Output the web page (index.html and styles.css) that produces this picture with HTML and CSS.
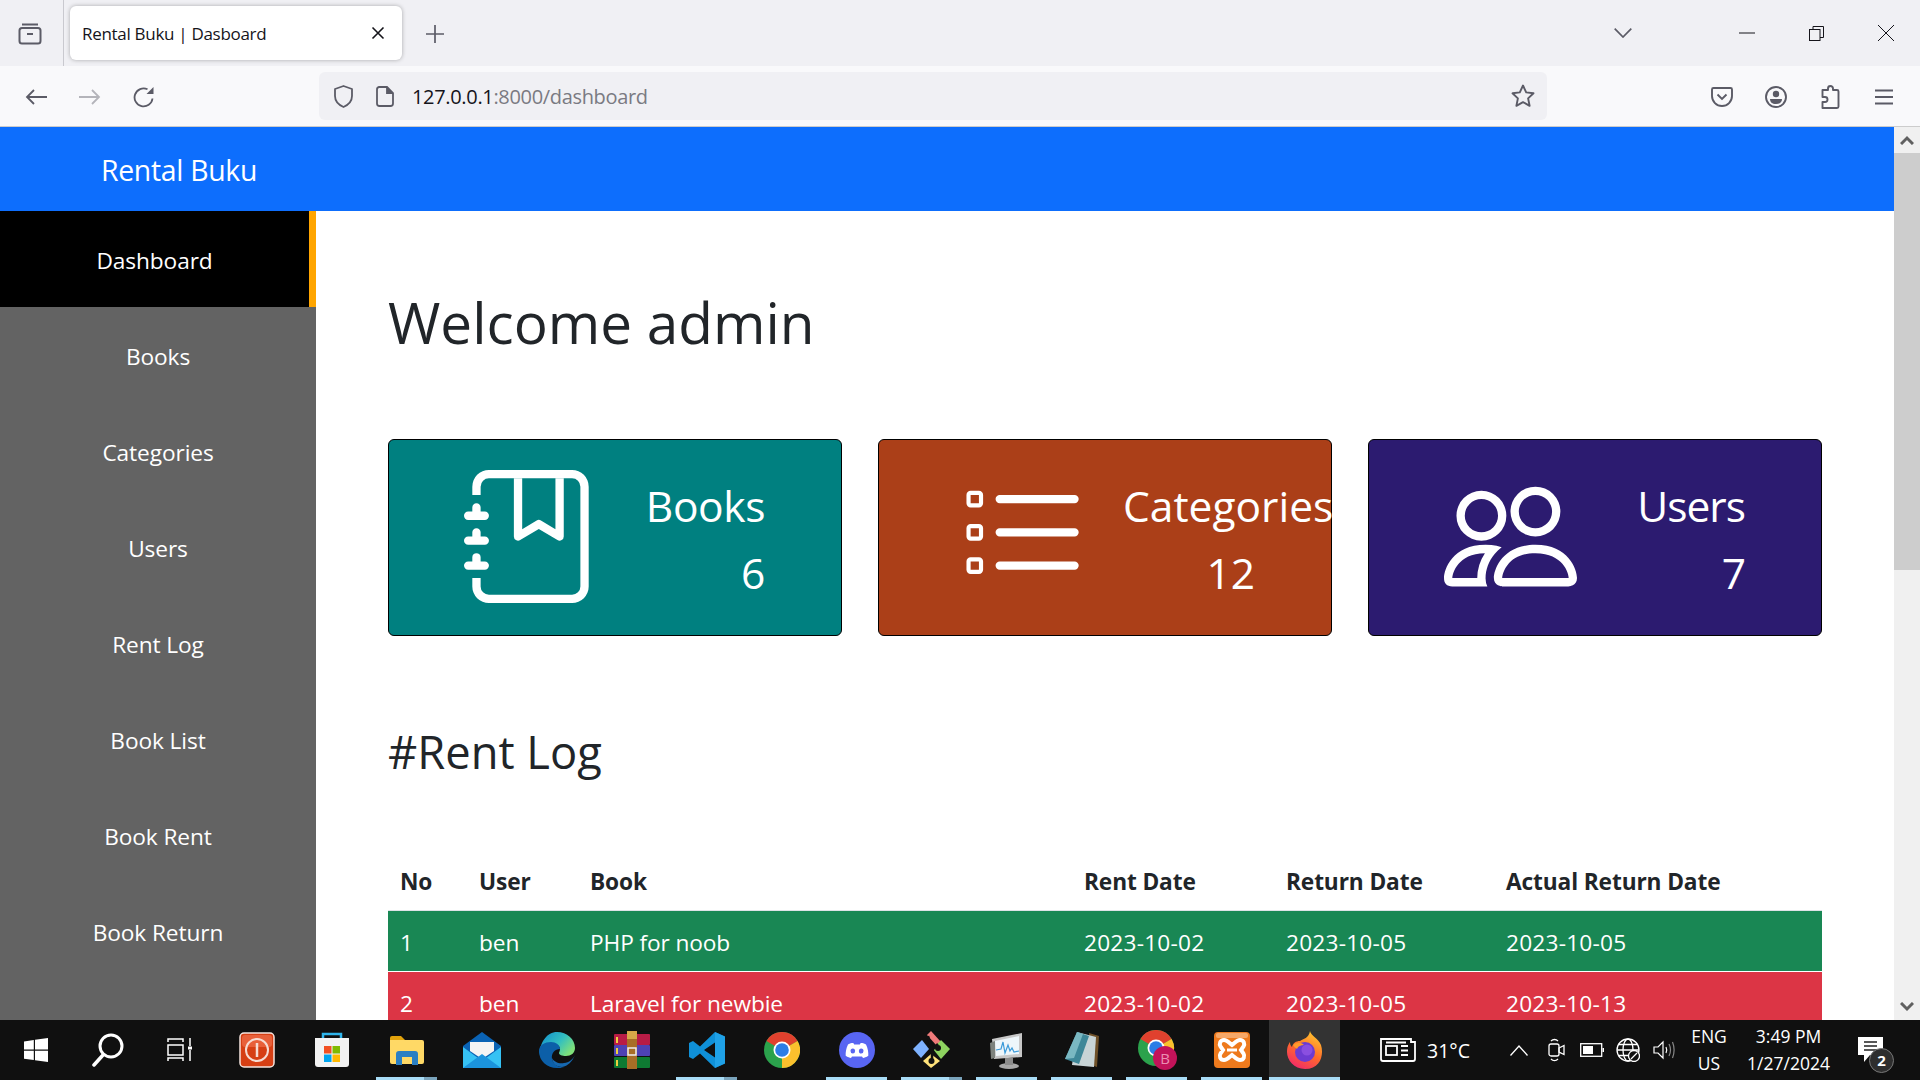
FILE: index.html
```html
<!DOCTYPE html>
<html lang="en">
<head>
<meta charset="utf-8">
<title>Rental Buku | Dasboard</title>
<link rel="stylesheet" href="styles.css">
</head>
<body>
<div class="screen">
  <div class="tabstrip">
    <span class="view-btn">
      <svg width="24" height="24" viewBox="0 0 24 24" fill="none" stroke="#5b5b66" stroke-width="2"><path d="M4 3.500h16"/><rect x="1.500" y="7" width="21" height="15.500" rx="2.500"/><path d="M9 13h6"/></svg>
    </span>
    <span class="tab-divider"></span>
    <div class="tab">
      <span class="tab-title">Rental Buku | Dasboard</span>
      <svg width="14" height="14" viewBox="0 0 14 14" stroke="#15141a" stroke-width="1.600"><path d="M1.500 1.500l11 11M12.500 1.500l-11 11"/></svg>
    </div>
    <svg class="new-tab" width="18" height="18" viewBox="0 0 18 18" stroke="#5b5b66" stroke-width="1.700"><path d="M9 0v18M0 9h18"/></svg>
    <svg class="tab-list" width="18" height="10" viewBox="0 0 18 10" fill="none" stroke="#5b5b66" stroke-width="1.700"><path d="M.7.7L9 9l8.300-8.300"/></svg>
    <svg class="win-min" width="16" height="2" viewBox="0 0 16 2" stroke="#15141a" stroke-width="1"><path d="M0 1h16"/></svg>
    <svg class="win-restore" width="15" height="15" viewBox="0 0 15 15" fill="none" stroke="#15141a" stroke-width="1"><rect x=".5" y="3.500" width="10.500" height="11"/><path d="M4 3.500V.5h10.500v11H11"/></svg>
    <svg class="win-close" width="16" height="16" viewBox="0 0 16 16" stroke="#15141a" stroke-width="1"><path d="M0 0l16 16M16 0L0 16"/></svg>
  </div>

  <div class="toolbar">
    <span class="tool-slot"><svg width="22" height="16" viewBox="0 0 22 16" fill="none" stroke="#5b5b66" stroke-width="1.800"><path d="M22 8H2M9 1L2 8l7 7"/></svg></span>
    <span class="tool-slot"><svg width="22" height="16" viewBox="0 0 22 16" fill="none" stroke="#b4b4ba" stroke-width="1.800"><path d="M0 8h20M13 1l7 7-7 7"/></svg></span>
    <span class="tool-slot"><svg width="22" height="22" viewBox="0 0 22 22" fill="none" stroke="#5b5b66" stroke-width="1.800"><path d="M19.500 12.500A9 9 0 1 1 14.500 3.300"/><path d="M20.500 1v7h-7z" fill="#5b5b66" stroke="none"/></svg></span>
    <div class="urlbar">
      <svg width="21" height="23" viewBox="0 0 21 23" fill="none" stroke="#5b5b66" stroke-width="1.800"><path d="M10.500 1L2 4v7c0 5 4 9 8.500 11 4.500-2 8.500-6 8.500-11V4z" stroke-linejoin="round"/></svg>
      <svg class="page-ic" width="18" height="21" viewBox="0 0 18 21" fill="none" stroke="#5b5b66" stroke-width="1.800"><path d="M3 1h8l6 6v10.500a2.500 2.500 0 0 1-2.500 2.500h-11A2.500 2.500 0 0 1 1 17.500v-14A2.500 2.500 0 0 1 3 1z"/><path d="M11 1v6h6" fill="#5b5b66"/></svg>
      <span class="url"><span class="url-host">127.0.0.1</span>:8000/dashboard</span>
      <svg class="star" width="24" height="24" viewBox="0 0 24 24" fill="none" stroke="#5b5b66" stroke-width="1.900" stroke-linejoin="round"><path d="M12 1.500l3.200 6.900 7.300.9-5.400 5.100 1.500 7.400L12 18.100l-6.600 3.700 1.500-7.400L1.500 9.300l7.300-.9z"/></svg>
    </div>
    <span class="tool-slot"><svg width="22" height="20" viewBox="0 0 22 20" fill="none" stroke="#5b5b66" stroke-width="1.900"><path d="M2.500 1h17A1.500 1.500 0 0 1 21 2.500V9a10 10 0 0 1-20 0V2.500A1.500 1.500 0 0 1 2.500 1z"/><path d="M6.500 7.500l4.500 4.500 4.500-4.500"/></svg></span>
    <span class="tool-slot"><svg width="22" height="22" viewBox="0 0 22 22" fill="none" stroke="#5b5b66" stroke-width="1.900"><circle cx="11" cy="11" r="10"/><circle cx="11" cy="8" r="3.200" fill="#5b5b66" stroke="none"/><path d="M5 13h12c0 3-2 5-6 5s-6-2-6-5z" fill="#5b5b66" stroke="none"/></svg></span>
    <span class="tool-slot"><svg width="20" height="24" viewBox="0 0 20 24" fill="none" stroke="#5b5b66" stroke-width="1.900" stroke-linejoin="round"><path d="M8 5V3.500a2.500 2.500 0 0 1 5 0V5h4a1.500 1.500 0 0 1 1.500 1.500v15a1.500 1.500 0 0 1-1.500 1.500H2.500v-6H5a2 2 0 0 0 0-5H2.500V5z"/></svg></span>
    <span class="tool-slot"><svg width="18" height="16" viewBox="0 0 18 16" stroke="#5b5b66" stroke-width="1.900"><path d="M0 1.500h18M0 8h18M0 14.500h18"/></svg></span>
  </div>

  <div class="viewport">
    <div class="app">
      <header class="brand">Rental Buku</header>
      <div class="app-body">
        <nav class="sidebar">
          <a class="nav-item active">Dashboard</a>
          <a class="nav-item">Books</a>
          <a class="nav-item">Categories</a>
          <a class="nav-item">Users</a>
          <a class="nav-item">Rent Log</a>
          <a class="nav-item">Book List</a>
          <a class="nav-item">Book Rent</a>
          <a class="nav-item">Book Return</a>
        </nav>
        <main class="main">
          <h1 class="title">Welcome admin</h1>
          <section class="cards">
            <div class="card teal">
              <svg class="card-icon" viewBox="0 0 16 16" fill="#fff"><path fill-rule="evenodd" d="M6 8V1h1v6.117L8.743 6.070a.5.5 0 0 1 .514 0L11 7.117V1h1v7a.5.5 0 0 1-.757.429L9 7.083 6.757 8.430A.5.5 0 0 1 6 8z"/><path d="M3 0h10a2 2 0 0 1 2 2v12a2 2 0 0 1-2 2H3a2 2 0 0 1-2-2v-1h1v1a1 1 0 0 0 1 1h10a1 1 0 0 0 1-1V2a1 1 0 0 0-1-1H3a1 1 0 0 0-1 1v1H1V2a2 2 0 0 1 2-2z"/><path d="M1 5v-.5a.5.5 0 0 1 1 0V5h.5a.5.5 0 0 1 0 1h-2a.5.5 0 0 1 0-1H1zm0 3v-.5a.5.5 0 0 1 1 0V8h.5a.5.5 0 0 1 0 1h-2a.5.5 0 0 1 0-1H1zm0 3v-.5a.5.5 0 0 1 1 0v.5h.5a.5.5 0 0 1 0 1h-2a.5.5 0 0 1 0-1H1z"/></svg>
              <div class="card-text"><div>Books</div><div>6</div></div>
            </div>
            <div class="card rust">
              <svg class="card-icon" viewBox="0 0 16 16" fill="#fff"><path fill-rule="evenodd" d="M2 2.500a.5.5 0 0 0-.5.5v1a.5.5 0 0 0 .5.5h1a.5.5 0 0 0 .5-.5V3a.5.5 0 0 0-.5-.5H2zM3 3H2v1h1V3z"/><path d="M5 3.500a.5.5 0 0 1 .5-.5h9a.5.5 0 0 1 0 1h-9a.5.5 0 0 1-.5-.5zM5.500 7a.5.5 0 0 0 0 1h9a.5.5 0 0 0 0-1h-9zm0 4a.5.5 0 0 0 0 1h9a.5.5 0 0 0 0-1h-9z"/><path fill-rule="evenodd" d="M1.500 7a.5.5 0 0 1 .5-.5h1a.5.5 0 0 1 .5.5v1a.5.5 0 0 1-.5.5H2a.5.5 0 0 1-.5-.5V7zM2 7h1v1H2V7zm0 3.500a.5.5 0 0 0-.5.5v1a.5.5 0 0 0 .5.5h1a.5.5 0 0 0 .5-.5v-1a.5.5 0 0 0-.5-.5H2zm1 .5H2v1h1v-1z"/></svg>
              <div class="card-text"><div>Categories</div><div>12</div></div>
            </div>
            <div class="card indigo">
              <svg class="card-icon" viewBox="0 0 16 16" fill="#fff"><path d="M15 14s1 0 1-1-1-4-5-4-5 3-5 4 1 1 1 1h8zm-7.978-1A.261.261 0 0 1 7 12.996c.001-.264.167-1.030.76-1.720C8.312 10.629 9.282 10 11 10c1.717 0 2.687.63 3.240 1.276.593.69.758 1.457.76 1.720l-.008.002a.274.274 0 0 1-.014.002H7.022zM11 7a2 2 0 1 0 0-4 2 2 0 0 0 0 4zm3-2a3 3 0 1 1-6 0 3 3 0 0 1 6 0zM6.936 9.280a5.880 5.880 0 0 0-1.230-.247A7.350 7.350 0 0 0 5 9c-4 0-5 3-5 4 0 .667.333 1 1 1h4.216A2.238 2.238 0 0 1 5 13c0-1.010.377-2.042 1.090-2.904.243-.294.526-.569.846-.816zM4.920 10A5.493 5.493 0 0 0 4 13H1c0-.26.164-1.030.76-1.724.545-.636 1.492-1.256 3.160-1.275zM1.500 5.500a3 3 0 1 1 6 0 3 3 0 0 1-6 0zm3-2a2 2 0 1 0 0 4 2 2 0 0 0 0-4z"/></svg>
              <div class="card-text"><div>Users</div><div>7</div></div>
            </div>
          </section>
          <h2 class="subtitle">#Rent Log</h2>
          <table class="log">
            <colgroup>
              <col class="c-no"><col class="c-user"><col class="c-book"><col class="c-rent"><col class="c-ret"><col class="c-act">
            </colgroup>
            <thead>
              <tr><th>No</th><th>User</th><th>Book</th><th>Rent Date</th><th>Return Date</th><th>Actual Return Date</th></tr>
            </thead>
            <tbody>
              <tr class="ok"><td>1</td><td>ben</td><td>PHP for noob</td><td>2023-10-02</td><td>2023-10-05</td><td>2023-10-05</td></tr>
              <tr class="late"><td>2</td><td>ben</td><td>Laravel for newbie</td><td>2023-10-02</td><td>2023-10-05</td><td>2023-10-13</td></tr>
            </tbody>
          </table>
        </main>
      </div>
    </div>
    <div class="scrollbar">
      <span class="sb-btn"><svg width="14" height="10" viewBox="0 0 14 10" fill="none" stroke="#606060" stroke-width="3"><path d="M1 9l6-6 6 6"/></svg></span>
      <span class="sb-thumb"></span>
      <span class="sb-track"></span>
      <span class="sb-btn"><svg width="14" height="10" viewBox="0 0 14 10" fill="none" stroke="#606060" stroke-width="3"><path d="M1 1l6 6 6-6"/></svg></span>
    </div>
  </div>

  <footer class="taskbar">
    <span class="sys-slot"><svg width="24" height="24" viewBox="0 0 24 24" fill="#fff"><path d="M0 3.400L9.800 2v9.500H0zM11 1.800L24 0v11.500H11zM0 12.700h9.800v9.400L0 20.700zM11 12.700h13V24l-13-1.800z"/></svg></span>
    <span class="sys-slot"><svg width="34" height="34" viewBox="0 0 34 34" fill="none" stroke="#fff"><circle cx="20" cy="13" r="11" stroke-width="3"/><path d="M12 22L3 32" stroke-width="3.500" stroke-linecap="round"/></svg></span>
    <span class="sys-slot"><svg width="26" height="24" viewBox="0 0 26 24" fill="none" stroke="#fff" stroke-width="1.500"><path d="M1 4V1h15v3M1 23v-3h15v3"/><rect x="1" y="7" width="15" height="10"/><path d="M23 0v8M23 12v11"/><rect x="21" y="8.500" width="4" height="3" fill="#fff" stroke="none"/></svg></span>
    <span class="app-gap"></span>

    <span class="app-slot"><svg width="36" height="36" viewBox="0 0 36 36"><rect x="1" y="1" width="34" height="34" rx="4" fill="#d63f14" stroke="#f4e4de" stroke-width="1.500"/><rect x="3" y="3" width="30" height="12" rx="3" fill="#e8603a"/><circle cx="18" cy="18" r="11" fill="none" stroke="#f6dcd3" stroke-width="2"/><path d="M18 11v14" stroke="#f6dcd3" stroke-width="2.500"/></svg></span>
    <span class="app-slot"><svg width="36" height="36" viewBox="0 0 36 36"><path d="M9 8V2h18v6" fill="none" stroke="#2fb5ec" stroke-width="2.500"/><path d="M1 6h34v26a3 3 0 0 1-3 3H4a3 3 0 0 1-3-3z" fill="#f2f2f2"/><rect x="10" y="14" width="7.500" height="7.500" fill="#f25022"/><rect x="18.500" y="14" width="7.500" height="7.500" fill="#7fba00"/><rect x="10" y="22.500" width="7.500" height="7.500" fill="#00a4ef"/><rect x="18.500" y="22.500" width="7.500" height="7.500" fill="#ffb900"/></svg></span>
    <span class="app-slot running split"><svg width="34" height="30" viewBox="0 0 34 30"><path d="M0 3a2 2 0 0 1 2-2h9l4 4h-15z" fill="#e2a30c"/><path d="M0 5h32a2 2 0 0 1 2 2v20a2 2 0 0 1-2 2H2a2 2 0 0 1-2-2z" fill="#ffd966"/><path d="M6 30V19a3 3 0 0 1 3-3h16a3 3 0 0 1 3 3v11h-6v-8H12v8z" fill="#2b7fc3"/></svg></span>
    <span class="app-slot"><svg width="38" height="36" viewBox="0 0 38 36"><path d="M19 0L38 14v22H0V14z" fill="#0a63b5"/><path d="M7 10h24v9L19 27 7 19z" fill="#f4f4f4"/><path d="M0 15l19 14 19-14v21H0z" fill="#36c2f4"/><path d="M0 36L19 22l19 14z" fill="#1b93dc"/></svg></span>
    <span class="app-slot"><svg width="36" height="36" viewBox="0 0 36 36"><defs><linearGradient id="edgeg" x1="0" y1="0" x2="1" y2=".6"><stop offset="0" stop-color="#0e8ad0"/><stop offset=".6" stop-color="#33bfc0"/><stop offset="1" stop-color="#7fe07a"/></linearGradient></defs><path d="M18 0c10 0 18 7 18 16 0 5-4 8-9 8-4 0-7-1-7-3 0-1 1-2 1-4 0-3-3-5-7-5-7 0-13 5-14 11C1 10 8 0 18 0z" fill="url(#edgeg)"/><path d="M0 19c0-6 6-9 12-9 5 0 9 3 9 7-5 0-9 4-8 10 1 5 6 9 12 8-2 1-5 1-7 1C8 36 0 29 0 19z" fill="#0c5fa8"/><path d="M36 23c-3 7-7 11-13 12-6 0-10-4-10-9 2 4 7 6 12 5 5 0 9-4 11-8z" fill="#1668b0"/></svg></span>
    <span class="app-slot"><svg width="36" height="38" viewBox="0 0 36 38"><rect y="3" width="36" height="11" rx="1" fill="#b81c46"/><rect y="14" width="36" height="11" rx="1" fill="#4e42b4"/><rect y="26" width="36" height="11" rx="1" fill="#0e7a32"/><rect x="13" y="0" width="10" height="38" fill="#a86e26"/><rect x="13" y="0" width="10" height="8" fill="#d8a848"/><rect x="14" y="17" width="8" height="7" fill="none" stroke="#eee" stroke-width="1.500"/><path d="M3 6v6M3 17v6M3 29v6" stroke="#f0d040" stroke-width="2"/></svg></span>
    <span class="app-slot running split"><svg width="37" height="36" viewBox="0 0 37 36"><path fill-rule="evenodd" d="M27 0l10 4.500v27L27 36 12 21.500 5 27l-4-2V11l4-2 7 5.500zM27 10.500L16 18l11 7.500z" fill="#0f90d8"/><path d="M27 0l10 4.500v27L27 36z" fill="#26a8ee" fill-opacity=".7"/></svg></span>
    <span class="app-slot"><svg width="36" height="36" viewBox="0 0 36 36"><circle cx="18" cy="18" r="18" fill="#2ba24c"/><path d="M18 18L2.400 9A18 18 0 0 1 33.600 9z" fill="#e0412e"/><path d="M18 18L33.600 9A18 18 0 0 1 18 36z" fill="#fbc02d"/><circle cx="18" cy="18" r="8.500" fill="#fff"/><circle cx="18" cy="18" r="6.800" fill="#2c7de6"/></svg></span>
    <span class="app-slot running"><svg width="36" height="36" viewBox="0 0 36 36"><circle cx="18" cy="18" r="18" fill="#5865f2"/><path d="M9 12.500c3-1.500 5-1.600 5.500-1.200l.7 1.300h5.600l.7-1.300c.5-.4 2.500-.3 5.500 1.200 2 4 2.500 8 2.300 11.300-2 1.500-4 2-5.300 2.200l-1-1.600H13l-1 1.600c-1.300-.2-3.300-.7-5.300-2.200-.2-3.300.3-7.300 2.300-11.300z" fill="#fff"/><ellipse cx="13.800" cy="19" rx="2.300" ry="2.600" fill="#5865f2"/><ellipse cx="22.200" cy="19" rx="2.300" ry="2.600" fill="#5865f2"/></svg></span>
    <span class="app-slot running split"><svg width="38" height="38" viewBox="0 0 38 38"><path d="M14 4l4-4 10 11-4 4z" fill="#f07a7a"/><path d="M0 18l9-9 7 9-8 9z" fill="#7eb2ff"/><path d="M20 18l8-9 9 9-9 10z" fill="#8ed460"/><path d="M10 30l8-7 9 7-9 7z" fill="#ffe27a"/><path d="M15 5l4 13v13M25 13l-6 6" stroke="#111" stroke-width="2.500" fill="none"/><circle cx="18.500" cy="30" r="3" fill="#111"/><circle cx="25" cy="17" r="3" fill="#111"/></svg></span>
    <span class="app-slot running"><svg width="34" height="38" viewBox="0 0 34 38"><path d="M2 8L32 2v24L4 28z" fill="#c8c8c8"/><path d="M5 10l24-5v18L6 25z" fill="#eef6fa"/><path d="M6 19l5-1 2-7 2 11 3-8 2 6 2-3 2 4 5-1" fill="none" stroke="#3a9ad9" stroke-width="1.200"/><path d="M0 12l5-2v17l-4 1z" fill="#7d827d"/><ellipse cx="19" cy="35" rx="10" ry="3" fill="#a8a8a8"/><path d="M15 27h8v7h-8z" fill="#8c8c8c"/></svg></span>
    <span class="app-slot running"><svg width="34" height="38" viewBox="0 0 34 38"><path d="M24 2l10 3-2 31-6-2z" fill="#6e5028"/><path d="M12 1l19 5-2 30-22-2z" fill="#c8d4d6"/><path d="M12 1L24 5 14 33 0 28z" fill="#3e8798"/><path d="M12 1l6 2-9 24-9 1z" fill="#7ab8c2"/></svg></span>
    <span class="app-slot running"><svg class="chrome-b" width="40" height="40" viewBox="0 0 40 40"><circle cx="18" cy="18" r="18" fill="#2ba24c"/><path d="M18 18L2.400 9A18 18 0 0 1 33.600 9z" fill="#e0412e"/><path d="M18 18L33.600 9A18 18 0 0 1 18 36z" fill="#fbc02d"/><circle cx="18" cy="18" r="8.500" fill="#fff"/><circle cx="18" cy="18" r="6.800" fill="#2c7de6"/><circle cx="27" cy="28" r="12" fill="#c2135a"/><text x="27" y="34" class="profile-b">B</text></svg></span>
    <span class="app-slot running"><svg width="36" height="36" viewBox="0 0 36 36"><rect width="36" height="36" rx="4" fill="#ee7a1d"/><rect x="2" y="1" width="32" height="5" rx="2" fill="#f6a868"/><path d="M10 8c-4 0-5 4-3.500 6.500L9 18l-2.500 3.500C5 24 6 28 10 28c3 0 5-2.500 8-5 3 2.500 5 5 8 5 4 0 5-4 3.500-6.500L27 18l2.500-3.500C31 12 30 8 26 8c-3 0-5 2.500-8 5-3-2.500-5-5-8-5z" fill="none" stroke="#fff" stroke-width="4"/><path d="M13 18h10" stroke="#fff" stroke-width="3"/></svg></span>
    <span class="app-slot current"><svg width="36" height="38" viewBox="0 0 36 38"><defs><linearGradient id="foxg" x1=".7" y1="0" x2=".2" y2="1"><stop offset="0" stop-color="#ffc42e"/><stop offset=".5" stop-color="#ff6a2b"/><stop offset="1" stop-color="#f0246e"/></linearGradient></defs><path d="M23 0c1 5 8 7 11 14 3 9 0 24-16 24C7 38 0 29 0 21c0-5 1-7 3-10 0 3 1 4 2 5 1-4 4-6 8-6 3-2 9-3 10-10z" fill="url(#foxg)"/><circle cx="18" cy="21" r="10" fill="#6d3bd1"/><path d="M6 14c4-3 8-3 11 0-3 0-6 1-7 4-1-1-3-2-4-4z" fill="#ff9a2b"/><circle cx="20" cy="19" r="5.500" fill="#8a4fe0"/></svg></span>

    <div class="tray">
      <svg width="36" height="24" viewBox="0 0 36 24" fill="none" stroke="#fff" stroke-width="1.800"><path d="M31 4V1H1v20a2 2 0 0 0 2 2h30a2 2 0 0 0 2-2V4z"/><rect x="6" y="8" width="11" height="9"/><path d="M21 8h7M21 12.500h7M21 17h7M6 4.500h20"/></svg>
      <span class="temp">31°C</span>
      <svg class="t-caret" width="18" height="11" viewBox="0 0 18 11" fill="none" stroke="#fff" stroke-width="1.300"><path d="M.5 10.500L9 1l8.500 9.500"/></svg>
      <svg class="t-meet" width="17" height="24" viewBox="0 0 17 24" fill="none" stroke="#fff" stroke-width="1.300"><rect x="1" y="6" width="10" height="12" rx="2"/><path d="M11 10l5-2.500v9L11 14zM3 3c2-2 5-2 7 0M3 21c2 2 5 2 7 0"/></svg>
      <svg class="t-batt" width="24" height="14" viewBox="0 0 24 14"><rect x=".7" y=".7" width="21" height="12.600" fill="none" stroke="#fff" stroke-width="1.300"/><rect x="3" y="3" width="10" height="8" fill="#fff"/><rect x="22.500" y="5" width="1.500" height="4" fill="#fff"/></svg>
      <svg class="t-globe" width="24" height="24" viewBox="0 0 24 24" fill="none" stroke="#fff" stroke-width="1.300"><circle cx="12" cy="12" r="11"/><ellipse cx="12" cy="12" rx="5" ry="11"/><path d="M1 12h22M2.500 6.500h19M2.500 17.500h19"/><circle cx="18" cy="18" r="5.500" fill="#111"/><path d="M15 21l6-6"/></svg>
      <svg class="t-sound" width="22" height="20" viewBox="0 0 22 20" fill="none" stroke="#fff" stroke-width="1.200"><path d="M1 7h4l5-5v16l-5-5H1z"/><path d="M13 7c1 2 1 4 0 6"/><path d="M16 4c2 4 2 8 0 12M19.500 2c2 5 2 11 0 16" stroke="#888"/></svg>
      <div class="t-col lang"><span>ENG</span><span>US</span></div>
      <div class="t-col clock"><span>3:49 PM</span><span>1/27/2024</span></div>
      <div class="notif">
        <svg width="25" height="26" viewBox="0 0 25 26"><path d="M0 0h25v18H12l-6 7v-7H0z" fill="#fff"/><path d="M6 5h13M6 9h13M6 13h13" stroke="#222" stroke-width="1.300"/></svg>
        <span class="notif-badge">2</span>
      </div>
    </div>
  </footer>
</div>
</body>
</html>
```

FILE: styles.css
```css
* { box-sizing: border-box; }
html, body { margin: 0; padding: 0; height: 100%; overflow: hidden; }
body { font-family: "Open Sans", "Noto Sans", sans-serif; color: #212529; background: #fff; }
svg { display: block; flex: none; }

.screen { width: 1920px; height: 1080px; display: flex; flex-direction: column; overflow: hidden; }

/* browser tab strip */
.tabstrip { height: 66px; background: #f0f0f4; display: flex; align-items: center; flex: none; }
.view-btn { margin-left: 18px; width: 24px; display: block; }
.tab-divider { width: 1px; height: 66px; background: #c9c9cf; margin-left: 21px; }
.tab { width: 332px; height: 54px; margin: 0 0 0 6px; background: #fff; border-radius: 6px; box-shadow: 0 0 4px rgba(0,0,0,.3); display: flex; align-items: center; justify-content: space-between; padding: 0 17px 0 12px; }
.tab-title { font-size: 17px; letter-spacing: -.3px; color: #15141a; }
.new-tab { margin: 1px 0 0 24px; }
.tab-list { margin-left: auto; margin-right: 107px; }
.win-min { margin-right: 54px; }
.win-restore { margin-right: 54px; }
.win-close { margin-right: 26px; }

/* browser toolbar */
.toolbar { height: 61px; background: #f9f9fb; border-bottom: 1px solid #ccc; display: flex; align-items: center; padding: 0 9px; flex: none; }
.tool-slot { width: 54px; display: flex; justify-content: center; align-items: center; padding-top: 2px; }
.urlbar { width: 1228px; height: 48px; margin: 0 148px 0 148px; background: #f0f0f4; border-radius: 6px; display: flex; align-items: center; padding: 0 12px 0 14px; }
.page-ic { margin-left: 22px; }
.url { margin-left: 18px; padding-top: 1px; font-size: 20px; letter-spacing: -.33px; color: #7a7a82; }
.url-host { color: #15141a; }
.star { margin-left: auto; }

/* page */
.viewport { flex: 1; display: flex; overflow: hidden; min-height: 0; }
.app { flex: 1; min-width: 0; display: flex; flex-direction: column; }
.brand { height: 84px; flex: none; background: #0d6efd; color: #fff; font-size: 28.400px; letter-spacing: -.3px; line-height: 86px; padding-left: 101px; }
.app-body { flex: 1; display: flex; min-height: 0; }
.sidebar { width: 316px; flex: none; background: #636363; }
.nav-item { display: block; height: 96px; line-height: 99px; text-align: center; font-size: 22.700px; letter-spacing: -.1px; color: #fff; }
.nav-item.active { background: #000; border-right: 7px solid #ffa500; }

.main { flex: 1; min-width: 0; padding: 0 72px; }
.title { margin: 75px 0 0; font-size: 56.700px; line-height: 72px; font-weight: 400; }
.cards { display: flex; gap: 36px; margin-top: 81px; }
.card { flex: 1; height: 197px; border: 1px solid #000; border-radius: 6px; color: #fff; display: flex; padding: 30px 0 0 75px; }
.teal { background: #008080; }
.rust { background: #ab3f18; }
.indigo { background: #2c1b70; }
.card-icon { width: 133px; height: 133px; }
.card-text { width: 132px; margin-left: 36px; padding-top: 2px; font-size: 42.500px; letter-spacing: -.4px; line-height: 67px; text-align: right; white-space: nowrap; }
.rust .card-text { letter-spacing: 0; }
.indigo .card-text { letter-spacing: -1px; }
.subtitle { margin: 87px 0 0; font-size: 45.300px; line-height: 58px; font-weight: 400; }
.log { width: 100%; margin-top: 69px; border-collapse: collapse; table-layout: fixed; font-size: 22.700px; letter-spacing: -.12px; }
.c-no { width: 79px; }
.c-user { width: 111px; }
.c-book { width: 494px; }
.c-rent { width: 202px; }
.c-ret { width: 220px; }
.log th { height: 60px; padding: 4px 12px 0; text-align: left; font-weight: 700; border-bottom: 1px solid #dee2e6; }
.log td { height: 61px; padding: 3px 12px 0; border-bottom: 1px solid #fff; color: #fff; }
.log td:nth-child(n+4) { letter-spacing: .2px; }
.ok { background: #198754; }
.late { background: #dc3545; }

/* page scrollbar */
.scrollbar { width: 26px; flex: none; background: #f0f0f0; display: flex; flex-direction: column; }
.sb-btn { height: 26px; display: flex; align-items: center; justify-content: center; flex: none; }
.sb-thumb { height: 417px; background: #cdcdcd; flex: none; }
.sb-track { flex: 1; }

/* windows taskbar */
.taskbar { height: 60px; flex: none; background: #101010; display: flex; align-items: stretch; color: #fff; }
.sys-slot { width: 72px; display: flex; align-items: center; justify-content: center; }
.app-gap { width: 3px; }
.app-slot { width: 75px; display: flex; align-items: center; justify-content: center; position: relative; }
.app-slot.running::after { content: ""; position: absolute; left: 7px; width: 61px; bottom: 0; height: 3px; background: #a8dcf6; }
.app-slot.split::before { content: ""; position: absolute; left: 55px; width: 13px; bottom: 0; height: 3px; background: #7aa4bc; z-index: 1; }
.app-slot.current { width: 71px; background: #333; }
.app-slot.current::after { content: ""; position: absolute; left: 0; right: 0; bottom: 0; height: 3px; background: #a8dcf6; }
.chrome-b { margin-left: 3px; }
.profile-b { font-size: 15px; fill: #eb8fb2; text-anchor: middle; }

.tray { margin-left: auto; display: flex; align-items: center; padding-right: 26px; font-size: 17.500px; }
.temp { margin-left: 11px; font-size: 19.500px; }
.t-caret { margin-left: 40px; }
.t-meet { margin-left: 20px; }
.t-batt { margin-left: 15px; }
.t-globe { margin-left: 12px; }
.t-sound { margin-left: 13px; }
.t-col { display: flex; flex-direction: column; align-items: center; gap: 4px; line-height: 23px; }
.lang { margin-left: 17px; width: 34px; }
.clock { margin-left: 21px; width: 83px; white-space: nowrap; }
.notif { position: relative; margin-left: 28px; width: 36px; height: 26px; }
.notif-badge { position: absolute; left: 11px; top: 11px; width: 25px; height: 25px; border-radius: 50%; background: #2e2e2e; border: 1px solid #777; font-size: 15px; line-height: 23px; text-align: center; font-weight: 700; color: #fff; }
```
